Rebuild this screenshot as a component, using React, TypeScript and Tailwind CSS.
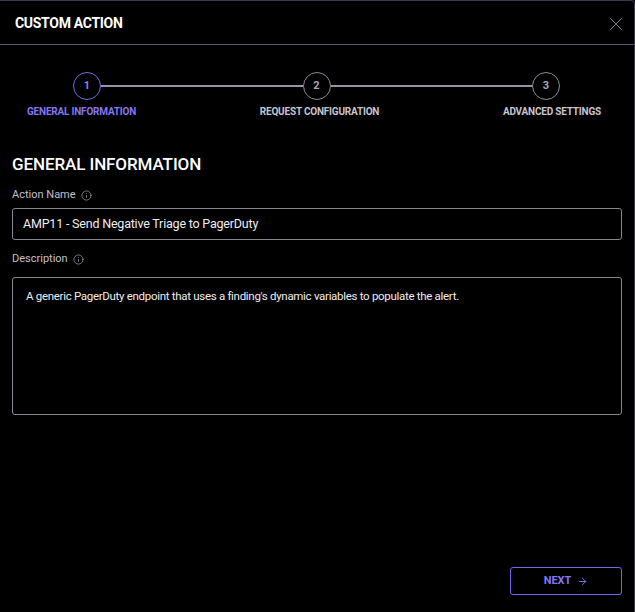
import { X, ArrowRight, Info } from "lucide-react";

const font = { fontFamily: "Roboto, 'Noto Sans', sans-serif" };

const steps = [
  { n: 1, label: "GENERAL INFORMATION", active: true },
  { n: 2, label: "REQUEST CONFIGURATION", active: false },
  { n: 3, label: "ADVANCED SETTINGS", active: false },
];

const Circle = ({ n, active }: { n: number; active: boolean }) => (
  <div
    className={
      active
        ? "w-[28px] h-[28px] rounded-full border border-[#7565ee] flex items-center justify-center text-[11px] font-bold text-[#8a7ef2] shrink-0"
        : "w-[28px] h-[28px] rounded-full border border-[#8d8b99] flex items-center justify-center text-[11px] font-bold text-[#a9a7b4] shrink-0"
    }
  >
    {n}
  </div>
);

const Line = () => <div className="flex-1 h-[2px] bg-[#9795a3]" />;

export default function App() {
  return (
    <div style={font} className="w-[635px] h-[612px] bg-black text-white overflow-hidden">
      <div className="h-full border-t border-r border-[#3b3850] rounded-tr-[4px] flex flex-col">
        {/* header */}
        <div className="h-[44px] flex items-center justify-between pl-[15px] pr-[6px] pt-[2px] border-b border-[#5a566e]">
          <span className="text-[14px] font-bold tracking-[-0.3px]">CUSTOM ACTION</span>
          <X size={24} strokeWidth={0.9} className="text-[#8e8c98]" />
        </div>

        {/* stepper */}
        <div className="pt-[27px]">
          <div className="flex items-center px-[73px] pr-[74px]">
            <Circle n={1} active />
            <Line />
            <Circle n={2} active={false} />
            <Line />
            <Circle n={3} active={false} />
          </div>
          <div className="flex justify-between pl-[27px] pr-[33px] mt-[4px]">
            {steps.map((s) => (
              <span
                key={s.n}
                className={
                  s.active
                    ? "text-[10px] font-bold text-[#8576f2] tracking-[-0.2px]"
                    : "text-[10px] font-bold text-[#c6c4d0] tracking-[-0.2px]"
                }
              >
                {s.label}
              </span>
            ))}
          </div>
        </div>

        {/* form */}
        <div className="px-[12px] pt-[34px] flex flex-col flex-1">
          <h2 className="text-[17px] font-medium tracking-[-0.1px] leading-[22px]">GENERAL INFORMATION</h2>

          <label className="mt-[13px] flex items-center gap-[5px] text-[11px] text-[#c3c1cc] leading-[14px]">
            Action Name <Info size={11} strokeWidth={1.4} className="text-[#b8b6c2]" />
          </label>
          <div className="mt-[6px] h-[32px] border border-[#8a8897] rounded-[3px] flex items-center pl-[10px] text-[12.5px] tracking-[-0.2px] text-[#eeedf2]">
            AMP11 - Send Negative Triage to PagerDuty
          </div>

          <label className="mt-[12px] flex items-center gap-[5px] text-[11px] text-[#c3c1cc] leading-[14px]">
            Description <Info size={11} strokeWidth={1.4} className="text-[#b8b6c2]" />
          </label>
          <div className="mt-[11px] h-[138px] border border-[#8a8897] rounded-[3px] pl-[13px] pt-[10px] text-[11.5px] tracking-[-0.3px] text-[#eeedf2]">
            A generic PagerDuty endpoint that uses a finding's dynamic variables to populate the alert.
          </div>

          <div className="flex-1" />
          <div className="flex justify-end pb-[17px]">
            <button className="w-[112px] h-[28px] border border-[#7565ee] rounded-[3px] flex items-center justify-center gap-[6px] text-[11px] font-bold text-[#8576f2]">
              NEXT <ArrowRight size={11} strokeWidth={2} />
            </button>
          </div>
        </div>
      </div>
    </div>
  );
}
